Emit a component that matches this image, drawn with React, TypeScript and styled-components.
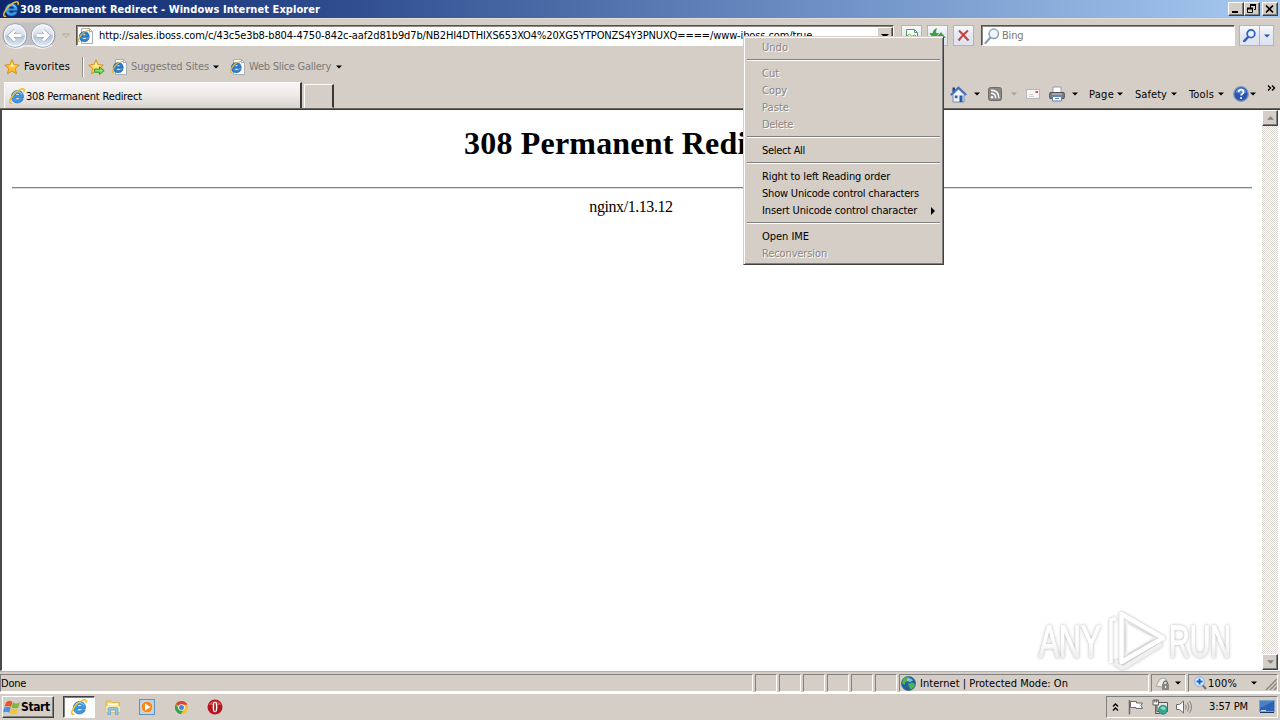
import React from 'react';
import styled, { createGlobalStyle, css } from 'styled-components';

const FACE = '#d5cec7';
const UI = `"DejaVu Sans Condensed", "Noto Sans", sans-serif`;

const Global = createGlobalStyle`
  * { box-sizing: border-box; }
  html, body { margin: 0; padding: 0; }
  body { width: 1280px; height: 720px; overflow: hidden; background: ${FACE}; }
`;

const Screen = styled.div`
  position: relative;
  display: flex;
  flex-direction: column;
  width: 1280px;
  height: 720px;
  overflow: hidden;
  background: ${FACE};
  color: #000;
  font: 11px/14px ${UI};
`;

const Label = styled.span<{ $track?: number; $dim?: boolean; $bold?: boolean; $drop?: number }>`
  flex: none;
  white-space: pre;
  padding-top: ${p => p.$drop ?? 0}px;
  letter-spacing: ${p => p.$track ?? 0}px;
  color: ${p => (p.$dim ? '#7d7974' : 'inherit')};
  font-weight: ${p => (p.$bold ? 700 : 400)};
`;

const Gap = styled.span<{ $w: number }>`
  flex: none;
  width: ${p => p.$w}px;
`;

const Spring = styled.span`
  flex: 1;
`;

const raised = css`
  border: 1px solid;
  border-color: #fff #404040 #404040 #fff;
  box-shadow: inset -1px -1px 0 #808080;
`;

const sunken = css`
  border: 1px solid;
  border-color: #808080 #fff #fff #808080;
`;

/* Title bar */
const TitleBar = styled.header`
  flex: none;
  display: flex;
  align-items: center;
  height: 18px;
  padding: 0 2px 0 3px;
  background: linear-gradient(90deg, #0c276c 0%, #2c4a8c 25%, #6a8cc2 62%, #a6caf0 100%);
  color: #fff;
`;

const CaptionButton = styled.button<{ $gap?: number }>`
  flex: none;
  display: flex;
  align-items: center;
  justify-content: center;
  width: 16px;
  height: 14px;
  margin: 0 0 0 ${p => p.$gap ?? 0}px;
  padding: 0;
  background: ${FACE};
  ${raised}
`;

/* Navigation row */
const NavRow = styled.div`
  flex: none;
  display: flex;
  align-items: flex-start;
  height: 36px;
  padding: 2px 5px 0 2px;
  border-top: 1px solid #e2ddd8;
`;

const NavTools = styled.div`
  flex: none;
  display: flex;
  align-items: flex-start;
  padding-top: 4px;
`;

const Field = styled.div<{ $w: number }>`
  flex: none;
  display: flex;
  align-items: center;
  width: ${p => p.$w}px;
  height: 21px;
  background: #fff;
  border: 1px solid;
  border-color: #55524e #fff #fff #55524e;
  box-shadow: inset 1px 1px 0 #8f8b86;
  overflow: hidden;
`;

const DropButton = styled.button`
  flex: none;
  display: flex;
  align-items: center;
  justify-content: center;
  width: 16px;
  height: 18px;
  margin: 0;
  padding: 0;
  background: ${FACE};
  ${raised}
`;

const GlassButton = styled.button<{ $w: number; $gap?: number; $open?: boolean }>`
  flex: none;
  display: flex;
  align-items: center;
  justify-content: center;
  width: ${p => p.$w}px;
  height: 21px;
  margin: 0 0 0 ${p => p.$gap ?? 0}px;
  padding: 0;
  border: 1px solid #b3b4b9;
  ${p => p.$open && 'border-left: 0;'}
  background: linear-gradient(#f6f8fc, #e4e8f2 50%, #dde3f0);
`;

/* Favorites row */
const FavRow = styled.div`
  flex: none;
  display: flex;
  align-items: center;
  height: 27px;
  padding: 0 0 2px 4px;
`;

const Divider = styled.span`
  flex: none;
  width: 2px;
  height: 20px;
  border-left: 1px solid #928d88;
  border-right: 1px solid #fff;
`;

/* Tab row */
const TabRow = styled.div`
  flex: none;
  display: flex;
  align-items: flex-end;
  height: 28px;
  padding-left: 4px;
  border-bottom: 1px solid #6b6762;
`;

const Tab = styled.div`
  flex: none;
  display: flex;
  align-items: center;
  width: 298px;
  height: 26px;
  padding: 1px 0 0 4px;
  background: linear-gradient(#f7f5f4, #eeebe9 45%, #d9d4cf);
  border-top: 1px solid #fff;
  border-left: 1px solid #fff;
  border-right: 2px solid #3a3836;
`;

const NewTab = styled.div`
  flex: none;
  width: 30px;
  height: 24px;
  margin-left: 2px;
  border: 1px solid;
  border-color: #fff #3a3836 transparent #fff;
  border-right-width: 2px;
`;

const Commands = styled.div`
  flex: none;
  display: flex;
  align-items: center;
  align-self: flex-start;
  height: 26px;
  margin-left: 616px;
`;

/* Page */
const Viewport = styled.main`
  flex: none;
  display: flex;
  height: 562px;
  background: #fff;
  border-top: 1px solid #3c3a38;
  border-left: 2px solid #4b4845;
  border-bottom: 1px solid #fff;
`;

const Page = styled.section`
  flex: 1;
  padding: 15px 10px 0;
  font-family: "Liberation Serif", serif;
  text-align: center;
`;

const Heading = styled.h1`
  margin: 0;
  font-size: 32px;
  line-height: 36px;
  letter-spacing: 0.19px;
`;

const Rule = styled.hr`
  height: 2px;
  margin: 26px 0 9px;
  border: 0;
  border-top: 1px solid #808080;
  border-bottom: 1px solid #dcdcdc;
`;

const Server = styled.p`
  margin: 0;
  padding-right: 2px;
  font-size: 16px;
  line-height: 18px;
  letter-spacing: -0.43px;
`;

const ScrollBar = styled.div`
  flex: none;
  display: flex;
  flex-direction: column;
  justify-content: space-between;
  width: 16px;
  height: 560px;
  margin-right: 2px;
  background: repeating-conic-gradient(#fff 0 25%, #dcd7d1 0 50%) 0 0 / 2px 2px;
`;

const ScrollButton = styled.button`
  display: flex;
  align-items: center;
  justify-content: center;
  width: 16px;
  height: 16px;
  padding: 0;
  background: ${FACE};
  ${raised}
`;

/* Status bar */
const StatusBar = styled.footer`
  flex: none;
  display: flex;
  gap: 2px;
  height: 22px;
  padding-top: 2px;
  border-top: 1px solid #b5b0aa;
  border-bottom: 1px solid #fff;
`;

const StatusCell = styled.div<{ $w: number }>`
  flex: none;
  display: flex;
  align-items: center;
  width: ${p => p.$w}px;
  height: 18px;
  ${sunken}
`;

/* Taskbar */
const TaskBar = styled.nav`
  flex: none;
  display: flex;
  align-items: flex-start;
  height: 27px;
  padding: 2px 2px 0;
  border-top: 1px solid #fff;
`;

const StartButton = styled.button`
  flex: none;
  display: flex;
  align-items: center;
  width: 52px;
  height: 22px;
  margin: 0;
  padding: 0;
  color: #000;
  background: ${FACE};
  font: bold 12px/14px ${UI};
  ${raised}
`;

const TaskItem = styled.div<{ $active?: boolean }>`
  flex: none;
  display: flex;
  align-items: center;
  justify-content: center;
  width: ${p => (p.$active ? 32 : 34)}px;
  height: 22px;
  ${p =>
    p.$active &&
    css`
      margin: 0 1px 0 9px;
      background: #fdfcfc;
      border: 1px solid;
      border-color: #404040 #fff #fff #404040;
      box-shadow: inset 1px 1px 0 #808080;
    `}
`;

const Tray = styled.div`
  flex: none;
  display: flex;
  align-items: center;
  width: 172px;
  height: 22px;
  padding-left: 5px;
  ${sunken}
`;

/* Context menu */
const Menu = styled.div`
  position: absolute;
  left: 743px;
  top: 36px;
  width: 201px;
  padding: 2px;
  background: ${FACE};
  border: 1px solid;
  border-color: ${FACE} #404040 #404040 ${FACE};
  box-shadow: inset 1px 1px 0 #fff, inset -1px -1px 0 #808080;
`;

const MenuItem = styled.div<{ $off?: boolean }>`
  display: flex;
  align-items: center;
  height: 17px;
  padding: 0 6px 0 16px;
  color: ${p => (p.$off ? '#8a857f' : '#000')};
  text-shadow: ${p => (p.$off ? '1px 1px 0 #fff' : 'none')};
`;

const MenuLine = styled.div`
  height: 2px;
  margin: 3px 1px 4px;
  border-top: 1px solid #808080;
  border-bottom: 1px solid #fff;
`;

const Watermark = styled.svg`
  position: absolute;
  left: 1030px;
  top: 604px;
  filter: drop-shadow(0 0 1.5px rgba(0, 0, 0, 0.3));
`;

const Arrow = ({ color = '#000', w = 7, up = false }: { color?: string; w?: number; up?: boolean }) => (
  <svg width={w} height={4} viewBox="0 0 8 4" style={{ flex: 'none' }}>
    <path d={up ? 'M0 4h8L4 0z' : 'M0 0h8L4 4z'} fill={color} />
  </svg>
);

const IeMark = ({ s = 16 }: { s?: number }) => (
  <svg width={s} height={s} viewBox="0 0 16 16" style={{ flex: 'none' }}>
    <path
      d="M14.500 9.700H6.100c.2 1.500 1.100 2.200 2.500 2.200 1 0 1.700-.4 2.200-1.100h3.400c-.8 2.600-2.900 4.100-5.700 4.100-3.700 0-6.100-2.500-6.100-6.100S4.900 2.600 8.600 2.600c3.900 0 6.100 2.700 5.900 7.100zM6.200 7.400h4.700c-.1-1.200-1-1.900-2.300-1.900-1.400 0-2.200.7-2.400 1.900z"
      fill="#3b9be6"
      stroke="#155aa8"
      strokeWidth=".6"
    />
    <path d="M4.300 5.800C5.300 4.100 6.800 3.700 8.600 3.700c2 0 3.600 1 4.300 2.700" fill="none" stroke="#a8dcfa" strokeWidth="1" />
    <path d="M3.200 15.100C.4 16.300 0 13.600 1.900 10.400 4.300 6 9 1.800 12.600.9c2.500-.6 3.200.9 2.200 3.200" fill="none" stroke="#f3b92c" strokeWidth="1.500" />
  </svg>
);

const IePage = () => (
  <svg width="16" height="16" viewBox="0 0 16 16" style={{ flex: 'none' }}>
    <path d="M3.500.5h8l3 3v12h-11z" fill="#fff" stroke="#a9adb5" />
    <path d="M11.500.5v3h3" fill="none" stroke="#a9adb5" />
    <path
      d="M11.300 9.400H4.300c.2 1.300 1 1.900 2.100 1.900.8 0 1.400-.3 1.800-.9h2.900c-.7 2.100-2.400 3.300-4.800 3.300-3.100 0-5-2-5-5s2-5.100 5.100-5.100 5.100 2.200 4.900 5.800zM4.400 7.600h3.900c-.1-1-.8-1.600-1.900-1.600s-1.900.6-2 1.600z"
      fill="#2b82d2"
      stroke="#134f94"
      strokeWidth=".5"
    />
    <path d="M1.800 13.500C.1 14.500.2 12 1.500 9.600 3.300 6.200 6.600 3.300 9.700 2.600c1.600-.3 2.200.5 1.600 2" fill="none" stroke="#e3b53b" strokeWidth="1.100" />
  </svg>
);

const STAR = 'M8 .8l2.100 4.800 5.200.5-3.900 3.500 1.100 5.200L8 12.100l-4.500 2.700 1.100-5.200L.7 6.100l5.200-.5z';

const Star = ({ add }: { add?: boolean }) => (
  <svg width="17" height="16" viewBox="0 0 17 16" style={{ flex: 'none' }}>
    <path d={STAR} fill={add ? '#fbd95a' : '#fdbf2d'} stroke="#d58a17" strokeWidth=".9" />
    <path d="M8 3l1.300 3.400 3.400.3-5.200 1.500-3-1.500 2.400-.3z" fill="#fff0a8" />
    {add && <path d="M6.500 10.200h5V8l4.700 3.700-4.700 3.700v-2.200h-5z" fill="#86dc6c" stroke="#2f9a2b" strokeWidth="1" />}
  </svg>
);

const NavButtons = () => (
  <svg width="70" height="30" viewBox="0 0 70 30" style={{ flex: 'none' }}>
    <defs>
      <linearGradient id="orb" x1="0" y1="0" x2="0" y2="1">
        <stop offset="0" stopColor="#f4f6fa" />
        <stop offset=".48" stopColor="#d8deea" />
        <stop offset=".52" stopColor="#b3c0d5" />
        <stop offset="1" stopColor="#e6f1fc" />
      </linearGradient>
    </defs>
    <path d="M13 1.500h28a13 13 0 0 1 0 26q-7 0-14-4-7 4-14 4a13 13 0 0 1 0-26z" fill="#c3c0c4" />
    <path d="M4 24q9 6 18 1h10q9 5 18-1" fill="none" stroke="#f3f2f2" strokeWidth="1.500" />
    {[13, 41].map(x => (
      <g key={x}>
        <circle cx={x} cy="14.500" r="11.700" fill="url(#orb)" stroke="#8f98aa" strokeWidth="1" />
        <circle cx={x} cy="14.500" r="10.600" fill="none" stroke="#f5f8fc" strokeWidth="1.200" />
      </g>
    ))}
    <path d="M19.500 14.500h-11M13 9.500l-5 5 5 5" fill="none" stroke="#93a3be" strokeWidth="4.200" />
    <path d="M19.500 14.500h-11M13 9.500l-5 5 5 5" fill="none" stroke="#fff" strokeWidth="3" />
    <path d="M34.500 14.500h11M41 9.500l5 5-5 5" fill="none" stroke="#93a3be" strokeWidth="4.200" />
    <path d="M34.500 14.500h11M41 9.500l5 5-5 5" fill="none" stroke="#fff" strokeWidth="3" />
    <path d="M60.500 13h7L64 16.500z" fill="#d5cec7" stroke="#aaa59f" strokeWidth=".9" />
  </svg>
);

const Lens = ({ color, fill, s = 16, bold = 1.5 }: { color: string; fill: string; s?: number; bold?: number }) => (
  <svg width={s} height={s} viewBox="0 0 16 16" style={{ flex: 'none' }}>
    <path d="M6.500 9.500L1.500 15" stroke={color} strokeWidth={bold + 0.8} strokeLinecap="round" />
    <circle cx="9.800" cy="5.800" r="4.700" fill={fill} stroke={color} strokeWidth={bold} />
  </svg>
);

const Flag = () => (
  <svg width="18" height="17" viewBox="0 0 18 17" style={{ flex: 'none' }}>
    <path d="M3 3.500q3-3 6.500-.5L8 8Q5 6 1.500 7.800z" fill="#e8562a" />
    <path d="M10 3.500q3 2 7-.3L15.300 8.500q-3.500 1.700-6.800 0z" fill="#7dba3b" />
    <path d="M1.300 8.800q3.300-2 6.400 0l-1.500 5q-3-2-6.200 0z" fill="#4a90de" />
    <path d="M8.300 9.300q3.300 1.800 6.800.3l-1.500 5q-3.400 1.500-6.800-.3z" fill="#f7c22f" />
  </svg>
);

type Entry = { text: string; track: number; off?: boolean; sub?: boolean } | null;

const entries: Entry[] = [
  { text: 'Undo', track: 0.04, off: true },
  null,
  { text: 'Cut', track: -0.02, off: true },
  { text: 'Copy', track: -0.03, off: true },
  { text: 'Paste', track: 0.07, off: true },
  { text: 'Delete', track: -0.25, off: true },
  null,
  { text: 'Select All', track: -0.29 },
  null,
  { text: 'Right to left Reading order', track: -0.11 },
  { text: 'Show Unicode control characters', track: -0.2 },
  { text: 'Insert Unicode control character', track: -0.14, sub: true },
  null,
  { text: 'Open IME', track: -0.04 },
  { text: 'Reconversion', track: -0.12, off: true },
];

export default function App() {
  return (
    <>
      <Global />
      <Screen>
        <TitleBar>
          <IeMark />
          <Gap $w={1} />
          <Label $bold $track={0.07} $drop={1}>308 Permanent Redirect - Windows Internet Explorer</Label>
          <Spring />
          <CaptionButton>
            <svg width="12" height="10"><path d="M2 8h6" stroke="#000" strokeWidth="2" /></svg>
          </CaptionButton>
          <CaptionButton>
            <svg width="12" height="10">
              <path d="M4.500 4V.5h5v5H8M1.500 4.500h5v4h-5z" fill="none" stroke="#000" />
              <path d="M4 1h6M1 4.500h6" stroke="#000" strokeWidth="2" />
            </svg>
          </CaptionButton>
          <CaptionButton $gap={2}>
            <svg width="12" height="10"><path d="M2 1.500l7 7M9 1.500l-7 7" stroke="#000" strokeWidth="1.700" /></svg>
          </CaptionButton>
        </TitleBar>

        <NavRow>
          <NavButtons />
          <Gap $w={4} />
          <NavTools>
            <Field $w={818}>
              <Gap $w={1} />
              <IePage />
              <Gap $w={5} />
              <Label $track={-0.12} $drop={1}>
                http://sales.iboss.com/c/43c5e3b8-b804-4750-842c-aaf2d81b9d7b/NB2HI4DTHIXS653XO4%20XG5YTPONZS4Y3PNUXQ====/www-iboss.com/true
              </Label>
              <Spring />
              <DropButton><Arrow w={8} /></DropButton>
            </Field>
            <GlassButton $w={21} $gap={7}>
              <svg width="14" height="15" viewBox="0 0 14 15">
                <path d="M1.500 1.500h8l3 3v9h-11z" fill="#fff" stroke="#4f9e52" />
                <path d="M9.500 1.500v3h3M2 8l2.500-2L7 8.500 9.500 7l3 2" fill="none" stroke="#4f9e52" />
              </svg>
            </GlassButton>
            <GlassButton $w={21} $gap={5}>
              <svg width="17" height="16" viewBox="0 0 17 16">
                <path d="M7.500.5Q4 2 3.800 5.500H.8L5.500 11 9.500 5.500H6.800Q6.500 3 7.500.5z" fill="#3da33f" stroke="#25802a" strokeWidth=".5" />
                <path d="M9.500 15.500q3.500-1.500 3.700-6h3L12 4.500 7.500 9.500h2.700q.3 3.500-.7 6z" fill="#3da33f" stroke="#25802a" strokeWidth=".5" />
              </svg>
            </GlassButton>
            <GlassButton $w={21} $gap={5}>
              <svg width="13" height="13" viewBox="0 0 13 13">
                <path d="M2 1.500q4 4 9.500 10M11 1.500q-5 4-9.500 10" fill="none" stroke="#c9403c" strokeWidth="2.100" />
              </svg>
            </GlassButton>
            <Gap $w={7} />
            <Field $w={254}>
              <Gap $w={2} />
              <Lens color="#8ea0b4" fill="#eef5fb" />
              <Gap $w={2} />
              <Label $dim $track={-0.2} $drop={1}>Bing</Label>
            </Field>
            <GlassButton $w={21} $gap={4}><Lens color="#2c62c4" fill="#eaf3fd" s={13} bold={2.2} /></GlassButton>
            <GlassButton $w={14} $open><Arrow color="#2456a8" w={6} /></GlassButton>
          </NavTools>
        </NavRow>

        <FavRow>
          <Star />
          <Gap $w={3} />
          <Label $track={0.16}>Favorites</Label>
          <Gap $w={12} />
          <Divider />
          <Gap $w={4} />
          <Star add />
          <Gap $w={7} />
          <IePage />
          <Gap $w={3} />
          <Label $dim $track={-0.13} $drop={1}>Suggested Sites</Label>
          <Gap $w={4} />
          <Arrow w={6} />
          <Gap $w={11} />
          <IePage />
          <Gap $w={3} />
          <Label $dim $track={-0.26} $drop={1}>Web Slice Gallery</Label>
          <Gap $w={5} />
          <Arrow w={6} />
        </FavRow>

        <TabRow>
          <Tab>
            <IeMark />
            <Gap $w={1} />
            <Label $track={-0.17} $drop={1}>308 Permanent Redirect</Label>
          </Tab>
          <NewTab />
          <Commands>
            <svg width="17" height="17" viewBox="0 0 17 17">
              <path d="M2.500 1.500H5v5H2.500z" fill="#2c3f86" />
              <path d="M3 8.500L8.500 3 14 8.500V16H3z" fill="#eef4fb" stroke="#5479ae" strokeWidth=".8" />
              <path d="M.8 9L8.500 1.500 16.200 9" fill="none" stroke="#3f6fb5" strokeWidth="1.800" />
              <path d="M9.500 9.500h3V16h-3z" fill="#2a5aa6" />
              <path d="M4.800 9.500h2.700v2.700H4.800z" fill="#2f61ab" />
            </svg>
            <Gap $w={7} />
            <Arrow w={6} />
            <Gap $w={8} />
            <svg width="14" height="14" viewBox="0 0 14 14">
              <rect x=".5" y=".5" width="13" height="13" rx="2" fill="#8b8884" stroke="#6f6c69" />
              <circle cx="4" cy="10.300" r="1.300" fill="#fff" />
              <path d="M3 6.300q4.700 0 4.700 5M3 3.200q7.900 0 7.900 8.100" fill="none" stroke="#fff" strokeWidth="1.500" />
            </svg>
            <Gap $w={9} />
            <Arrow w={6} color="#a7a19b" />
            <Gap $w={9} />
            <svg width="14" height="10" viewBox="0 0 14 10">
              <rect x=".5" y=".5" width="13" height="9" fill="#f7f5f5" stroke="#b9b6b8" />
              <path d="M9.500 2h2.500v2H9.500z" fill="#d2504d" />
              <path d="M3 5.500h4M3 7.500h5" stroke="#cfccd0" />
            </svg>
            <Gap $w={9} />
            <svg width="16" height="16" viewBox="0 0 16 16">
              <path d="M4 1h8v6H4z" fill="#fff" stroke="#9a9ca3" />
              <path d="M1 6.500h14q1 3 0 6H1q-1-3 0-6z" fill="#7b8087" stroke="#4e5258" />
              <path d="M3 8h10" stroke="#c9cdd3" />
              <path d="M3.500 10.500h9V15h-9z" fill="#f4f8ff" stroke="#6c7fa6" />
              <path d="M6 12.500h4" stroke="#4d83d9" />
            </svg>
            <Gap $w={7} />
            <Arrow w={6} />
            <Gap $w={11} />
            <Label $track={0.27} $drop={1}>Page</Label>
            <Gap $w={3} />
            <Arrow w={6} />
            <Gap $w={12} />
            <Label $track={0.06} $drop={1}>Safety</Label>
            <Gap $w={4} />
            <Arrow w={6} />
            <Gap $w={12} />
            <Label $track={0.16} $drop={1}>Tools</Label>
            <Gap $w={4} />
            <Arrow w={6} />
            <Gap $w={9} />
            <svg width="16" height="16" viewBox="0 0 16 16">
              <circle cx="8" cy="8" r="7.300" fill="#2b55b5" stroke="#8396bd" strokeWidth="1.200" />
              <path d="M2.500 6.500a5.700 5.700 0 0 1 11 0q-5.500 2-11 0z" fill="#5f88d4" />
              <path d="M5.600 6q.2-2.300 2.500-2.300T10.500 6q0 1.200-1.300 1.900-1.100.6-1.100 1.700" fill="none" stroke="#fff" strokeWidth="1.700" />
              <circle cx="8.100" cy="12" r="1.100" fill="#fff" />
            </svg>
            <Gap $w={1} />
            <Arrow w={6} />
            <Gap $w={11} />
            <svg width="9" height="22" viewBox="0 0 9 22">
              <path d="M1 2.500L3.500 5 1 7.500M5 2.500L7.500 5 5 7.500" fill="none" stroke="#000" strokeWidth="1.400" />
            </svg>
          </Commands>
        </TabRow>

        <Viewport>
          <Page>
            <Heading>308 Permanent Redirect</Heading>
            <Rule />
            <Server>nginx/1.13.12</Server>
          </Page>
          <ScrollBar>
            <ScrollButton><Arrow up color="#808080" /></ScrollButton>
            <ScrollButton><Arrow color="#808080" /></ScrollButton>
          </ScrollBar>
        </Viewport>

        <StatusBar>
          <StatusCell $w={753}><Label $track={-0.2} $drop={1}>Done</Label></StatusCell>
          {[0, 1, 2, 3, 4, 5].map(i => <StatusCell key={i} $w={22} />)}
          <StatusCell $w={250}>
            <Gap $w={1} />
            <svg width="15" height="15" viewBox="0 0 15 15">
              <circle cx="7.500" cy="7.500" r="7" fill="#1f62ab" stroke="#265f6d" strokeWidth=".7" />
              <path d="M2 3.500Q5 0 9 1.500L7.500 4.500 4.500 6 3.500 9 1 7zM7 8l4-1.500 3 1.500q-1 4.500-4.500 5.500L8 10.500z" fill="#4fb64b" />
              <path d="M6 2.500q4-1 6 2l-3 1.500-3-1z" fill="#9fd4f4" opacity=".8" />
            </svg>
            <Gap $w={4} />
            <Label $track={0.04} $drop={1}>Internet | Protected Mode: On</Label>
          </StatusCell>
          <StatusCell $w={35}>
            <Gap $w={3} />
            <svg width="16" height="15" viewBox="0 0 16 15">
              <path d="M1 10L5 3q3-2 6 0l1 4-5 4z" fill="#efedeb" stroke="#aaa6a2" />
              <path d="M8.500 8V6.500q2-3 4 0V8" fill="none" stroke="#77736f" strokeWidth="1.300" />
              <rect x="7" y="8" width="7" height="6" fill="#8b8783" />
              <path d="M10.500 10v2" stroke="#fff" />
            </svg>
            <Gap $w={4} />
            <Arrow w={6} />
          </StatusCell>
          <StatusCell $w={90}>
            <Gap $w={5} />
            <svg width="13" height="14" viewBox="0 0 13 14">
              <path d="M8 8.500l4 4.500" stroke="#70737b" strokeWidth="2" />
              <circle cx="5.500" cy="5.500" r="4.800" fill="#e3f1ff" stroke="#83a9d8" />
              <path d="M5.500 2.500v6M2.500 5.500h6" stroke="#1b62c8" strokeWidth="2" />
            </svg>
            <Gap $w={1} />
            <Label $track={0.18} $drop={1}>100%</Label>
            <Gap $w={14} />
            <Arrow w={6} />
            <Spring />
            <svg width="12" height="14" viewBox="0 0 12 14">
              <path d="M1 14L12 3M5 14l7-7M9 14l3-3" stroke="#8d8883" strokeWidth="1.500" />
            </svg>
          </StatusCell>
        </StatusBar>

        <TaskBar>
          <StartButton>
            <Flag />
            <Label $bold $track={-0.4}>Start</Label>
          </StartButton>
          <TaskItem $active><IeMark /></TaskItem>
          <TaskItem>
            <svg width="16" height="16" viewBox="0 0 16 16">
              <path d="M1 2h5l1 1.500h7.500V13H1z" fill="#f3d671" stroke="#d6b04a" strokeWidth=".8" />
              <path d="M3 4.500h10v2H3z" fill="#fffbe4" />
              <path d="M1 7h14v6H1z" fill="#fae89c" />
              <path d="M3 15.500V10q0-1.500 1.500-1.500h7Q13 8.500 13 10v5.500h-2.500V11h-5v4.500z" fill="#8cc4ea" stroke="#5b9ac9" strokeWidth=".6" />
            </svg>
          </TaskItem>
          <TaskItem>
            <svg width="16" height="16" viewBox="0 0 16 16">
              <rect x=".5" y=".5" width="15" height="15" fill="#b9d4ec" stroke="#5d92c4" />
              <circle cx="8" cy="8" r="5.800" fill="#f58a1c" stroke="#fbd9ae" strokeWidth=".8" />
              <path d="M6 4.500v7l5.500-3.500z" fill="#fff" />
            </svg>
          </TaskItem>
          <TaskItem>
            <svg width="15" height="15" viewBox="0 0 16 16">
              <circle cx="8" cy="8" r="7" fill="#f2c230" />
              <path d="M8 8L1.900 4.500A7 7 0 0 1 14.300 5H8z" fill="#dc4437" />
              <path d="M1.900 4.500A7 7 0 0 0 7.500 15L10.600 9.500 5 9.500z" fill="#31a350" />
              <circle cx="8" cy="8" r="3.500" fill="#fff" />
              <circle cx="8" cy="8" r="2.700" fill="#4582ea" />
            </svg>
          </TaskItem>
          <TaskItem>
            <svg width="16" height="16" viewBox="0 0 16 16">
              <circle cx="8" cy="8" r="7.500" fill="#b3151c" />
              <path d="M1.500 6a7 6 0 0 1 13 0z" fill="#d8494b" />
              <ellipse cx="8" cy="8" rx="2.400" ry="5.300" fill="#fff" />
              <ellipse cx="8" cy="8" rx=".9" ry="4.600" fill="#a1141a" />
            </svg>
          </TaskItem>
          <Spring />
          <Tray>
            <svg width="7" height="10" viewBox="0 0 7 10">
              <path d="M1 4.500L3.500 2 6 4.500M1 8.500L3.500 6 6 8.500" fill="none" stroke="#000" strokeWidth="1.300" />
            </svg>
            <Gap $w={9} />
            <svg width="16" height="16" viewBox="0 0 16 16">
              <path d="M1.500 1v14.500" stroke="#6d6a67" strokeWidth="1.500" />
              <path d="M2.500 2.500h6V4h6L13 6.500l1.500 3H8V8.500H2.500z" fill="#fff" stroke="#6d6a67" />
            </svg>
            <Gap $w={8} />
            <svg width="17" height="16" viewBox="0 0 17 16">
              <path d="M5 3.500h10.500v9H5z" fill="#dfe5e6" stroke="#5d5b59" />
              <path d="M1 1h5.500v5H1z" fill="#fff" stroke="#5d5b59" />
              <path d="M2.800 1v2.500M4.700 1v2.500M3.700 6v8.500H8" fill="none" stroke="#5d5b59" strokeWidth="1.200" />
              <circle cx="11" cy="10.800" r="4.500" fill="#35a58f" stroke="#23756d" strokeWidth=".7" />
              <path d="M8 9q3-3 6 0-1 2.500-3 2z" fill="#8adcc6" />
            </svg>
            <Gap $w={6} />
            <svg width="18" height="16" viewBox="0 0 18 16">
              <path d="M1.500 5.500h3L8.500 2v12l-4-3.500h-3z" fill="#fff" stroke="#6d6a67" />
              <path d="M10.500 5.500q1.500 2.500 0 5M12.500 3.500q3 4.500 0 9M14.500 2q4 6 0 12" fill="none" stroke="#85817d" strokeWidth="1" />
            </svg>
            <Gap $w={16} />
            <Label $track={-0.12}>3:57 PM</Label>
            <Gap $w={11} />
            <svg width="16" height="14" viewBox="0 0 16 14">
              <rect x=".5" y=".5" width="15" height="11" fill="#2c63b3" stroke="#7f9fc6" />
              <path d="M1 1h14L1 8z" fill="#6d9fdb" opacity=".5" />
              <path d="M1 12.500h14" stroke="#1a355f" />
              <path d="M2 10.500h5" stroke="#cfe0f2" />
            </svg>
          </Tray>
        </TaskBar>

        <Watermark width="212" height="72" viewBox="0 0 212 72">
          <defs>
            <linearGradient id="fade" x1="0" y1="0" x2="0" y2="1">
              <stop offset=".5" stopColor="#fff" />
              <stop offset=".75" stopColor="#f0f0f0" />
            </linearGradient>
          </defs>
          <g fill="url(#fade)" stroke="url(#fade)" strokeWidth="1.300" fontFamily="'Liberation Sans Narrow', 'Liberation Sans', sans-serif" fontSize="44">
            <text x="9" y="53" textLength="62" lengthAdjust="spacingAndGlyphs">ANY</text>
            <text x="139" y="53" textLength="62" lengthAdjust="spacingAndGlyphs">RUN</text>
          </g>
          <g fill="none" strokeLinejoin="round">
            <path d="M81 59V16l5-1.500" stroke="#fff" strokeWidth="3.500" />
            <path d="M132 40L93 64l-7-4 1-4" stroke="#f0f0f0" strokeWidth="4" />
            <path d="M91.500 56V10L133 34 91.500 58z" stroke="#fff" strokeWidth="4.500" />
            <path d="M97 20v29l26-15z" fill="#fff" stroke="#f6f6f6" strokeWidth="1.500" />
          </g>
        </Watermark>

        <Menu>
          {entries.map((e, i) =>
            e ? (
              <MenuItem key={i} $off={e.off}>
                <Label $track={e.track}>{e.text}</Label>
                {e.sub && (
                  <>
                    <Spring />
                    <svg width="4" height="8" viewBox="0 0 4 8"><path d="M0 0v8l4-4z" /></svg>
                  </>
                )}
              </MenuItem>
            ) : (
              <MenuLine key={i} />
            ),
          )}
        </Menu>
      </Screen>
    </>
  );
}
